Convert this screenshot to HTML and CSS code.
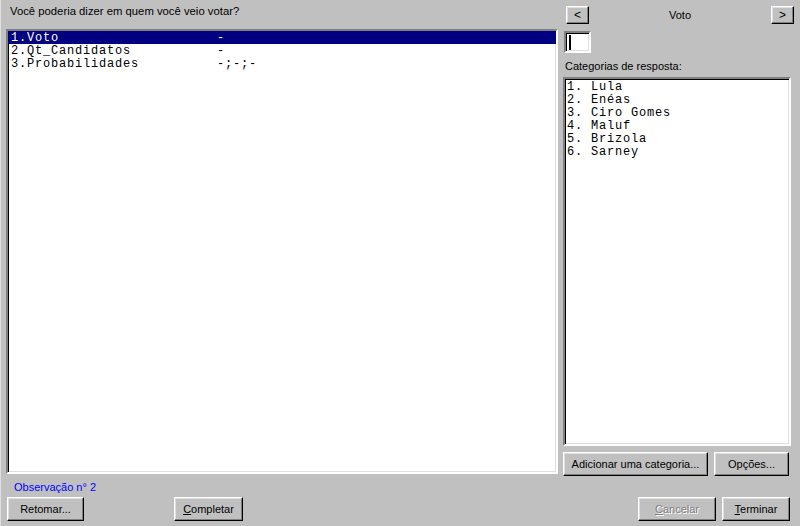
FILE: index.html
```html
<!DOCTYPE html>
<html lang="pt">
<head>
<meta charset="utf-8">
<title>Voto</title>
<link rel="stylesheet" href="styles.css">
</head>
<body>
<div class="window">
  <div class="main">
    <div class="left">
      <div class="question">Você poderia dizer em quem você veio votar?</div>
      <div class="sunken listbox">
        <div class="row selected"><span class="name">1.Voto</span><span class="val">-</span></div>
        <div class="row"><span class="name">2.Qt_Candidatos</span><span class="val">-</span></div>
        <div class="row"><span class="name">3.Probabilidades</span><span class="val">-;-;-</span></div>
      </div>
    </div>
    <div class="right">
      <div class="nav">
        <button class="btn navbtn">&lt;</button>
        <span class="navtitle">Voto</span>
        <button class="btn navbtn">&gt;</button>
      </div>
      <div class="sunken input"><span class="caret"></span></div>
      <div class="label">Categorias de resposta:</div>
      <div class="sunken catlist">
        <div class="cat">1. Lula</div>
        <div class="cat">2. Enéas</div>
        <div class="cat">3. Ciro Gomes</div>
        <div class="cat">4. Maluf</div>
        <div class="cat">5. Brizola</div>
        <div class="cat">6. Sarney</div>
      </div>
      <div class="actions">
        <button class="btn btn-add">Adicionar uma categoria...</button>
        <button class="btn btn-opt">Opções...</button>
      </div>
    </div>
  </div>
  <div class="obs">Observação n° 2</div>
  <div class="footer">
    <button class="btn btn-retomar">Retomar...</button>
    <button class="btn btn-completar"><u>C</u>ompletar</button>
    <span class="spacer"></span>
    <button class="btn btn-cancelar disabled"><u>C</u>ancelar</button>
    <button class="btn btn-terminar"><u>T</u>erminar</button>
  </div>
</div>
</body>
</html>
```

FILE: styles.css
```css
html, body {
  margin: 0;
  padding: 0;
  background: #c0c0c0;
}
body {
  width: 800px;
  height: 526px;
  overflow: hidden;
  font-family: "Liberation Sans", Arial, sans-serif;
  font-size: 11px;
  color: #000;
}
.window {
  width: 800px;
  height: 526px;
  box-sizing: border-box;
  border-left: 1px solid #dfdfdf;
  display: flex;
  flex-direction: column;
}
.main {
  display: flex;
  height: 476px;
}
.left {
  width: 552px;
  margin-left: 5px;
  display: flex;
  flex-direction: column;
}
.question {
  height: 29px;
  box-sizing: border-box;
  padding: 5px 0 0 4px;
  line-height: 13px;
  font-size: 11.3px;
}
.sunken {
  box-sizing: border-box;
  background: #fff;
  border: 2px solid;
  border-color: #808080 #fff #fff #808080;
  box-shadow: inset 1px 1px 0 #000, inset -1px -1px 0 #dfdfdf;
}
.listbox {
  height: 445px;
  padding: 0;
  font-family: "Liberation Mono", "Courier New", monospace;
  font-size: 12px;
  letter-spacing: 0.8px;
}
.row {
  height: 13px;
  box-sizing: border-box;
  padding: 1px 0 0 3px;
  line-height: 12px;
  white-space: pre;
  display: flex;
}
.row.selected {
  background: #000080;
  color: #fff;
}
.name {
  width: 206px;
}
.right {
  width: 228px;
  margin-left: 5px;
  display: flex;
  flex-direction: column;
}
.nav {
  display: flex;
  align-items: center;
  margin: 6px 0 0 3px;
  width: 228px;
  height: 18px;
}
.navtitle {
  flex: 1;
  text-align: center;
  line-height: 18px;
}
.btn {
  box-sizing: border-box;
  background: #c0c0c0;
  border: 1px solid;
  border-color: #fff #000 #000 #fff;
  box-shadow: inset -1px -1px 0 #808080, inset 1px 1px 0 #dfdfdf;
  font-family: "Liberation Sans", Arial, sans-serif;
  font-size: 11px;
  color: #000;
  padding: 0;
  margin: 0;
  height: 24px;
  line-height: 20px;
  text-align: center;
}
.navbtn {
  width: 23px;
  height: 18px;
  line-height: 14px;
  font-size: 12px;
}
.input {
  width: 27px;
  height: 22px;
  margin: 7px 0 0 1px;
  padding: 2px 0 0 2px;
}
.caret {
  display: block;
  width: 2px;
  height: 15px;
  margin-left: 1px;
  background: #000;
}
.label {
  margin: 7px 0 0 2px;
  height: 17px;
  line-height: 13px;
}
.catlist {
  height: 369px;
  padding: 2px 0 0 2px;
  font-family: "Liberation Mono", "Courier New", monospace;
  font-size: 12px;
  letter-spacing: 0.8px;
}
.cat {
  height: 13px;
  line-height: 13px;
  white-space: pre;
}
.actions {
  display: flex;
  margin-top: 6px;
  gap: 6px;
}
.btn-add {
  width: 145px;
}
.btn-opt {
  width: 75px;
}
.obs {
  height: 21px;
  box-sizing: border-box;
  padding: 5px 0 0 13px;
  line-height: 13px;
  color: #0000ff;
}
.footer {
  display: flex;
  align-items: flex-start;
  padding-left: 6px;
}
.btn-retomar {
  width: 77px;
}
.btn-completar {
  width: 69px;
  margin-left: 90px;
}
.spacer {
  flex: 1;
}
.btn-cancelar {
  width: 78px;
}
.btn-terminar {
  width: 68px;
  margin-left: 6px;
  margin-right: 10px;
}
.disabled {
  color: #808080;
  text-shadow: 1px 1px 0 #fff;
}
u {
  text-decoration: underline;
  text-underline-offset: 1px;
}
```
